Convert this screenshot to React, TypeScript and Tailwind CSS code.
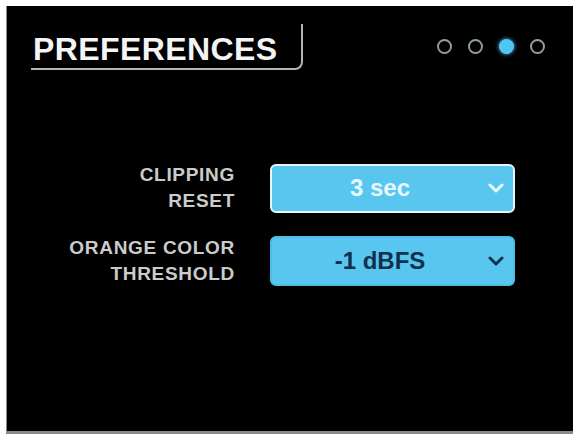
function Chevron({ color }: { color: string }) {
  return (
    <svg width="16" height="10" viewBox="0 0 16 10" className="absolute right-[9px] top-1/2 -translate-y-1/2">
      <path d="M2 2 L8 8 L14 2" fill="none" stroke={color} strokeWidth="3" strokeLinecap="round" strokeLinejoin="round" />
    </svg>
  );
}

function Select({ value, active }: { value: string; active?: boolean }) {
  return (
    <div
      className={
        active
          ? "relative flex h-[49px] w-[245px] items-center rounded-[6px] border-2 border-[#e4f5fb] bg-[#58c6ef] pr-[25px]"
          : "relative flex h-[50px] w-[245px] items-center rounded-[6px] border-2 border-[#4fbde6] bg-[#58c6ef] pr-[25px]"
      }
    >
      <span
        className={
          active
            ? "flex-1 text-center text-[24px] font-bold text-[#e8f7fd]"
            : "flex-1 text-center text-[24px] font-bold text-[#10304d]"
        }
      >
        {value}
      </span>
      <Chevron color={active ? "#eaf8fd" : "#10304d"} />
    </div>
  );
}

const rows = [
  { label: ["CLIPPING", "RESET"], value: "3 sec", active: true },
  { label: ["ORANGE COLOR", "THRESHOLD"], value: "-1 dBFS", active: false },
];

export default function App() {
  return (
    <div className="h-[434px] w-[573px] overflow-hidden bg-white pl-[6px] pt-[6px] font-['Liberation_Sans',Arial,sans-serif]">
      <div className="h-[428px] border-b-[3px] border-l border-[#8a8a8a] bg-black">
        <div className="flex items-start">
          <div className="ml-[24px] mt-[18px] h-[46px] w-[272px] rounded-br-[8px] border-b-2 border-r-2 border-[#b5b5b5] pl-[2px] pt-[9px]">
            <h1 className="text-[32px] font-bold leading-[32px] tracking-[0.4px] text-[#f4f4f4]">PREFERENCES</h1>
          </div>
          <div className="ml-auto mr-[28px] mt-[33px] flex gap-[16px]">
            <span className="h-[15px] w-[15px] rounded-full border-2 border-[#8fa08f]" />
            <span className="h-[15px] w-[15px] rounded-full border-2 border-[#8fa08f]" />
            <span className="h-[15px] w-[15px] rounded-full bg-[#4fc6f6] shadow-[0_0_4px_#4fc6f6]" />
            <span className="h-[15px] w-[15px] rounded-full border-2 border-[#9a9a9a]" />
          </div>
        </div>
        <div className="mt-[92px] flex flex-col gap-[21px]">
          {rows.map((r) => (
            <div key={r.value} className="flex items-center">
              <div className="w-[228px] text-right text-[19px] font-bold leading-[26px] tracking-[0.7px] text-[#cbcbcb]">
                {r.label.map((l) => (
                  <div key={l}>{l}</div>
                ))}
              </div>
              <div className="ml-[35px]">
                <Select value={r.value} active={r.active} />
              </div>
            </div>
          ))}
        </div>
      </div>
    </div>
  );
}
